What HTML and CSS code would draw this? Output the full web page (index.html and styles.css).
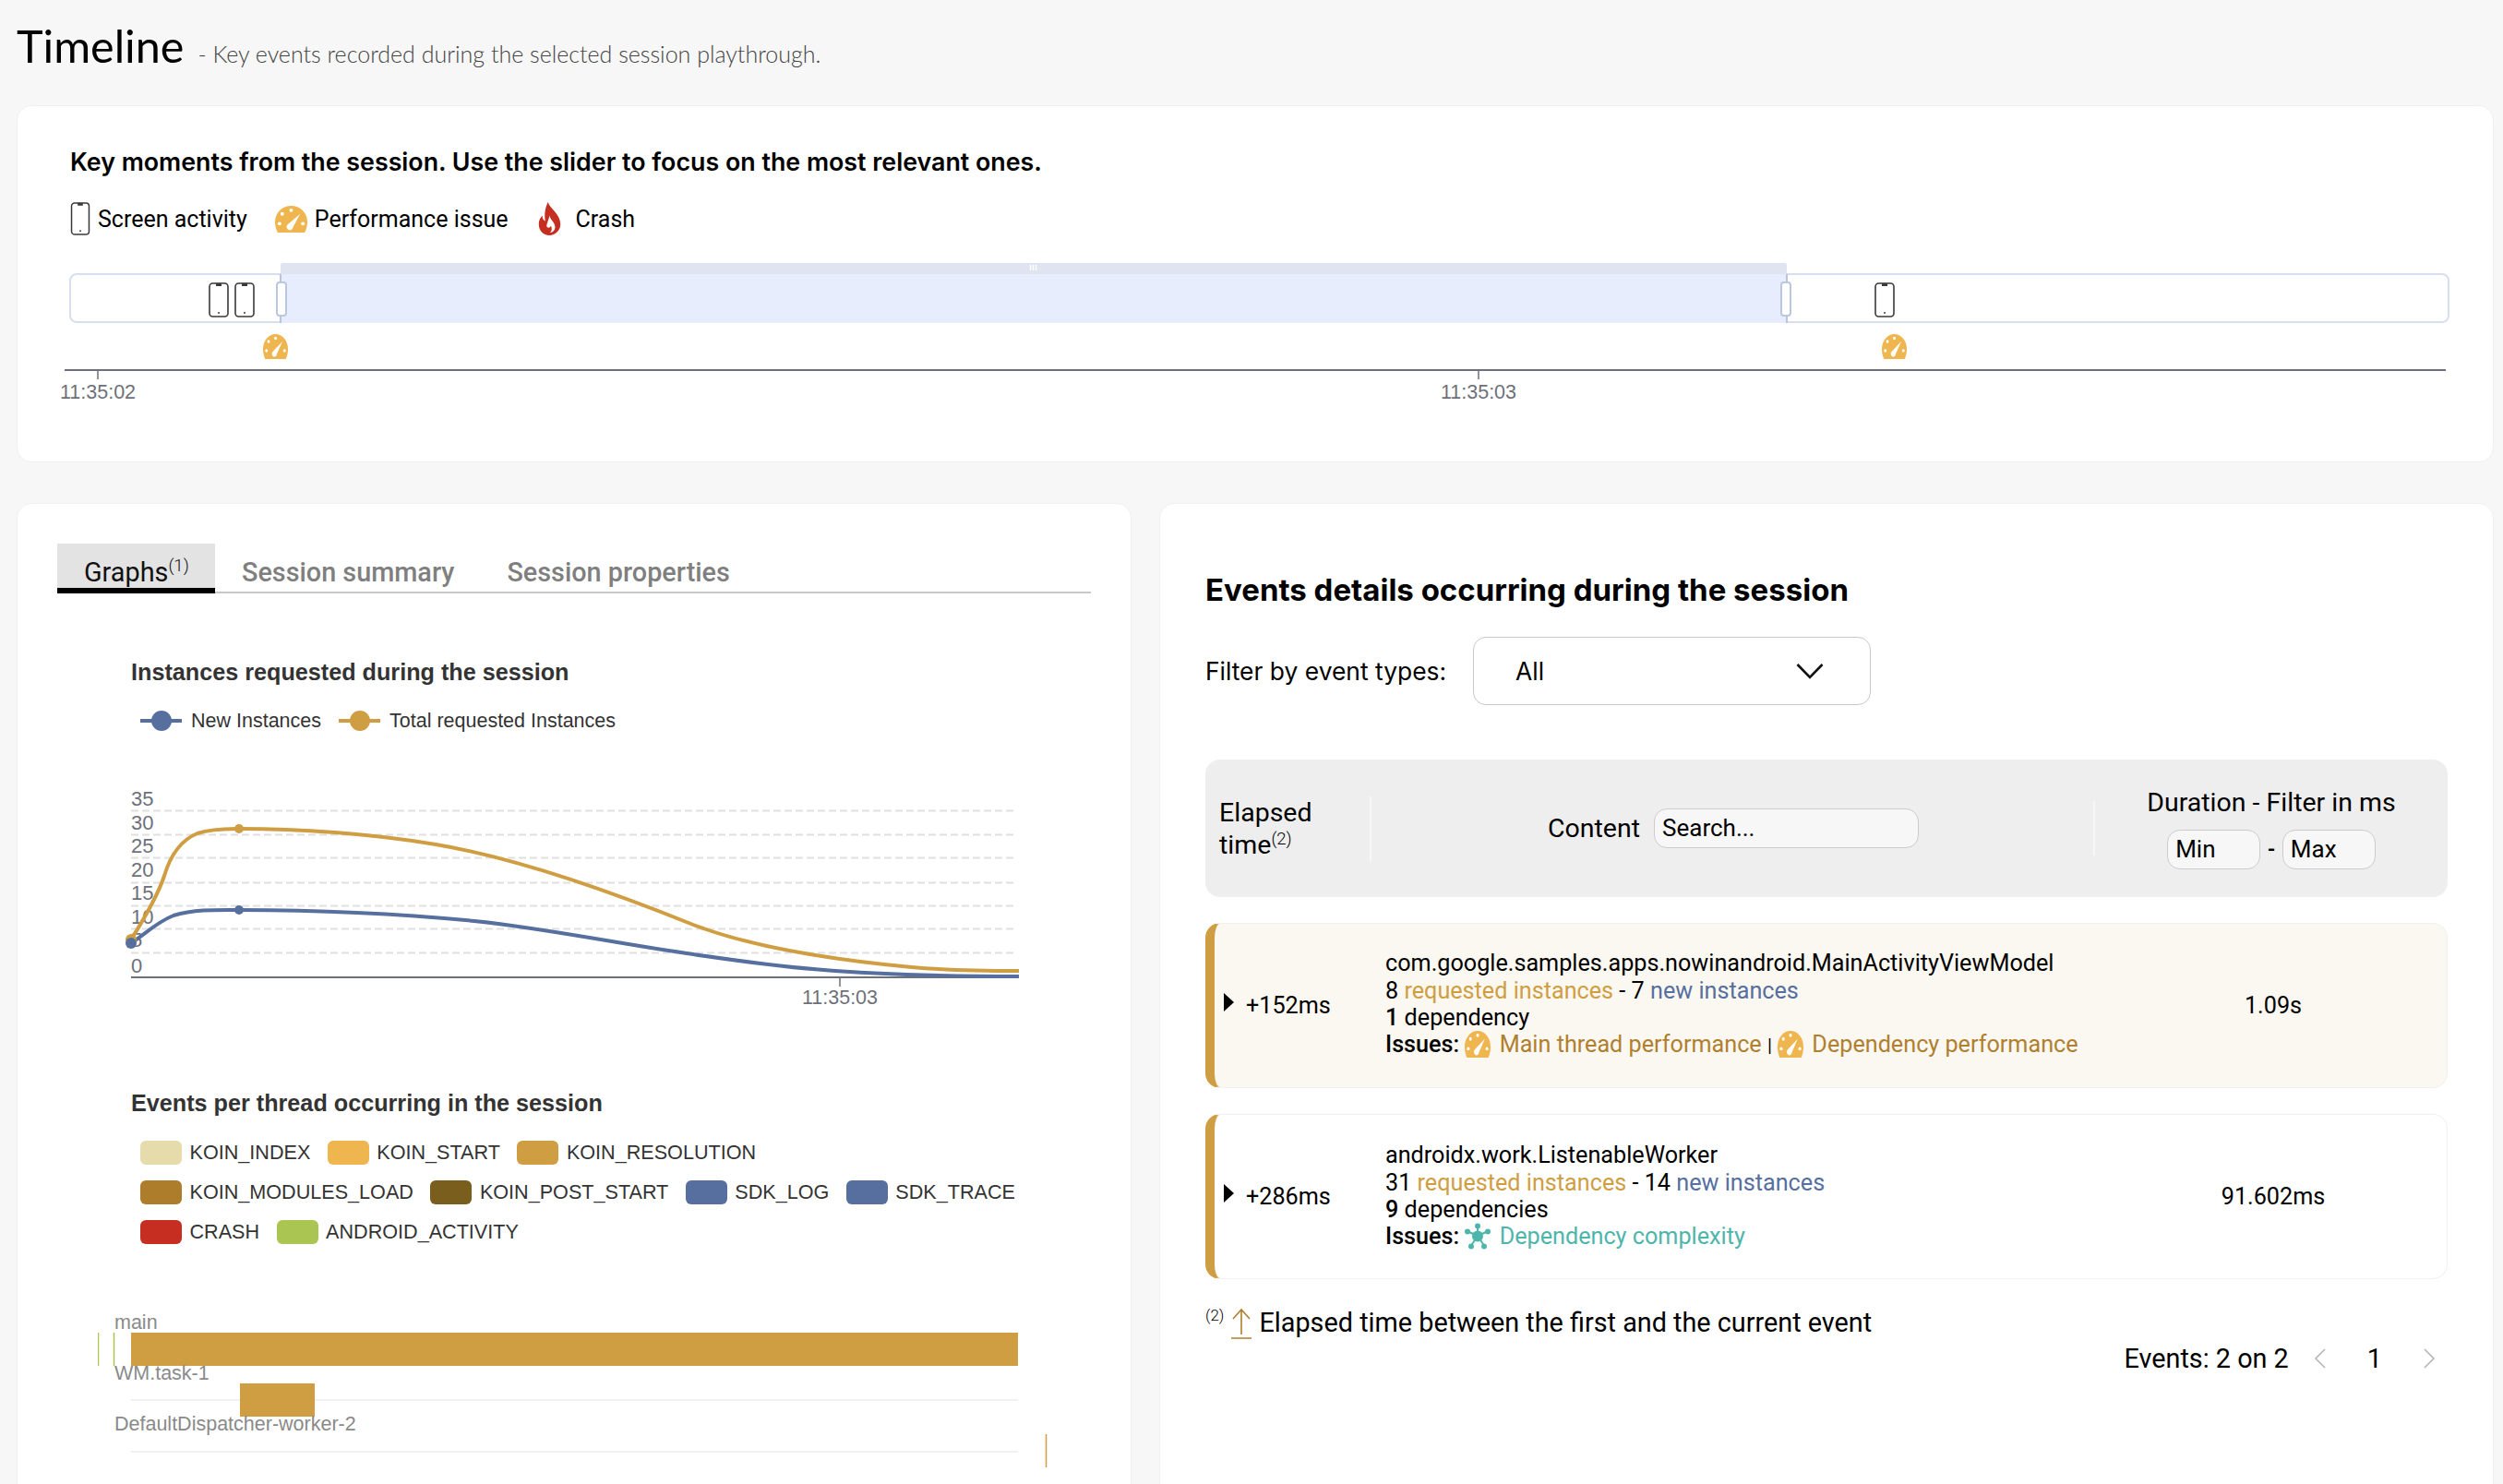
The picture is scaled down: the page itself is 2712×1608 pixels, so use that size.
FILE: index.html
```html
<!DOCTYPE html>
<html lang="en">
<head>
  <meta charset="UTF-8" />
  <title>Timeline</title>
  <link rel="stylesheet" href="styles.css">
</head>
<body>
  <svg class="defs" width="0" height="0">
    <symbol id="gauge" viewBox="0 0 36 30" preserveAspectRatio="none">
      <path fill="#efb54f" d="M3 30C1 26 0 22 0 18a18 18 0 0 1 36 0c0 4-1 8-3 12z"/>
      <g fill="#fff">
        <circle cx="18" cy="5" r="2"/>
        <circle cx="8" cy="9" r="2"/>
        <circle cx="5" cy="20" r="2"/>
        <circle cx="31" cy="20" r="2"/>
        <path d="M28 9 L20 24a3.6 3.6 0 1 1-6-3z"/>
      </g>
    </symbol>
    <symbol id="flame" viewBox="0 0 73 112">
      <path fill="#c72e22" d="M31 0C36 20 73 40 73 75C73 97 55 112 36 112C15 112 0 96 0 75C0 62 5 52 12 46C12 56 16 62 22 64C18 40 22 18 31 0z"/>
      <path fill="#fff" d="M37 44C35 58 56 66 55 86C54 96 46 102 38 103C45 96 45 88 41 80C38 86 32 88 28 84C24 79 30 68 37 44z"/>
    </symbol>
    <symbol id="phone" viewBox="0 0 22 38">
      <rect x="1" y="1" width="20" height="36" rx="3.5" fill="#fff" stroke="#3a3a3a" stroke-width="1.6"/>
      <rect x="8" y="1" width="6" height="3" fill="#3a3a3a"/>
      <circle cx="11" cy="33" r="1" fill="#3a3a3a"/>
    </symbol>
    <symbol id="network" viewBox="0 0 28 28">
      <g stroke="#4eb5ab" stroke-width="2">
        <path d="M14 14L14 4M14 14L4 9M14 14L24 9M14 14L7 24M14 14L21 24"/>
      </g>
      <g fill="#4eb5ab">
        <circle cx="14" cy="14" r="6"/>
        <circle cx="14" cy="3" r="3"/>
        <circle cx="3" cy="9" r="3"/>
        <circle cx="25" cy="9" r="3"/>
        <circle cx="7" cy="25" r="3"/>
        <circle cx="21" cy="25" r="3"/>
      </g>
    </symbol>
  </svg>

  <header class="page-head">
    <h1>Timeline</h1>
    <span>- Key events recorded during the selected session playthrough.</span>
  </header>

  <section class="card timeline-card">
    <h2>Key moments from the session. Use the slider to focus on the most relevant ones.</h2>
    <div class="moment-legend">
      <span class="moment-item"><svg class="ico-phone"><use href="#phone"/></svg>Screen activity</span>
      <span class="moment-item"><svg class="ico-gauge"><use href="#gauge"/></svg>Performance issue</span>
      <span class="moment-item"><svg class="ico-flame"><use href="#flame"/></svg>Crash</span>
    </div>
    <svg class="timeline" width="2600" height="160" viewBox="0 0 2600 160">
      <rect x="6" y="20" width="2577" height="52" rx="7" fill="#fff" stroke="#d7deef" stroke-width="2"/>
      <rect x="234" y="8" width="1632" height="12" rx="2" fill="#dfe4f0"/>
      <rect x="234" y="20" width="1632" height="53" fill="#e7edfc"/>
      <path d="M234 20v53M1866 20v53" stroke="#b9c5de" stroke-width="2"/>
      <rect x="230" y="29" width="10" height="36" rx="3" fill="#fff" stroke="#bac7e0" stroke-width="2"/>
      <rect x="1860" y="29" width="10" height="36" rx="3" fill="#fff" stroke="#bac7e0" stroke-width="2"/>
      <path d="M1046.500 10v6M1049.500 10v6M1052.500 10v6" stroke="#fff" stroke-width="1.500"/>
      <use href="#phone" x="156" y="29" width="22" height="38"/>
      <use href="#phone" x="184" y="29" width="22" height="38"/>
      <use href="#phone" x="1961" y="29" width="22" height="38"/>
      <use href="#gauge" x="215" y="85" width="27" height="27"/>
      <use href="#gauge" x="1969" y="85" width="27" height="27"/>
      <rect x="0" y="123" width="2580" height="2" fill="#6e7079"/>
      <path d="M36 124v10M1532 124v10" stroke="#6e7079" stroke-width="1.500"/>
      <text class="axis-label" x="36" y="155" text-anchor="middle">11:35:02</text>
      <text class="axis-label" x="1532" y="155" text-anchor="middle">11:35:03</text>
    </svg>
  </section>

  <div class="columns">
    <section class="card graphs-card">
      <nav class="tabs">
        <span class="tab active">Graphs<sup>(1)</sup></span>
        <span class="tab">Session summary</span>
        <span class="tab">Session properties</span>
      </nav>

      <h3 class="chart-title">Instances requested during the session</h3>
      <div class="line-legend">
        <span class="line-item"><i class="line-key blue"></i>New Instances</span>
        <span class="line-item"><i class="line-key gold"></i>Total requested Instances</span>
      </div>
      <svg class="line-chart" width="1000" height="240" viewBox="0 0 1000 240">
        <g class="grid">
          <path d="M0 27.500H958M0 53.500H958M0 78.500H958M0 105.500H958M0 130.500H958M0 155.500H958M0 181.500H958"/>
        </g>
        <g class="y-label">
          <text x="0" y="22">35</text>
          <text x="0" y="48">30</text>
          <text x="0" y="73">25</text>
          <text x="0" y="99">20</text>
          <text x="0" y="124">15</text>
          <text x="0" y="150">10</text>
          <text x="0" y="175">5</text>
          <text x="0" y="203">0</text>
        </g>
        <rect x="0" y="207" width="962" height="2" fill="#6e7079"/>
        <path d="M768 208v10" stroke="#6e7079" stroke-width="1.500"/>
        <text class="axis-label" x="768" y="237" text-anchor="middle">11:35:03</text>
        <path class="curve gold-line" d="M0 167C12 148 28 122 36 98C42 78 52 60 72 52C86 47.500 100 47 117 47C180 47 260 52 330 64C420 79 520 115 609 151C680 178 770 190 846 197C890 201 930 201 962 201"/>
        <path class="curve blue-line" d="M0 171C14 162 28 148 46 141C70 134 95 135 117 135C200 135 290 139 372 147C450 155 530 172 609 183C690 195 770 207 962 207"/>
        <circle cx="0" cy="167" r="6" fill="#d09e42"/>
        <circle cx="0" cy="171" r="6" fill="#566f9f"/>
        <circle cx="117" cy="47" r="5" fill="#d09e42"/>
        <circle cx="117" cy="135" r="5" fill="#566f9f"/>
      </svg>

      <h3 class="chart-title thread-title">Events per thread occurring in the session</h3>
      <div class="thread-legend">
        <span class="key"><i class="k-index"></i>KOIN_INDEX</span>
        <span class="key"><i class="k-start"></i>KOIN_START</span>
        <span class="key"><i class="k-resolution"></i>KOIN_RESOLUTION</span>
        <span class="key"><i class="k-modules"></i>KOIN_MODULES_LOAD</span>
        <span class="key"><i class="k-post"></i>KOIN_POST_START</span>
        <span class="key"><i class="k-sdk"></i>SDK_LOG</span>
        <span class="key"><i class="k-sdk"></i>SDK_TRACE</span>
        <span class="key"><i class="k-crash"></i>CRASH</span>
        <span class="key"><i class="k-activity"></i>ANDROID_ACTIVITY</span>
      </div>
      <svg class="thread-chart" width="1060" height="190" viewBox="0 0 1060 190">
        <text class="thread-name" x="18" y="27">main</text>
        <rect x="36" y="31" width="961" height="36" fill="#d09e42"/>
        <path d="M0.500 31v36M17.500 31v36" stroke="#abc552" stroke-width="1.500"/>
        <text class="thread-name" x="18" y="82">WM.task-1</text>
        <rect x="36" y="103" width="961" height="2" fill="#f0f1f3"/>
        <rect x="154" y="86" width="81" height="36" fill="#d09e42"/>
        <text class="thread-name" x="18" y="137">DefaultDispatcher-worker-2</text>
        <rect x="36" y="159" width="961" height="2" fill="#f0f1f3"/>
        <path d="M1027.500 141v36" stroke="#d09e42" stroke-width="1.500"/>
      </svg>
    </section>

    <section class="card events-card">
      <h2 class="events-title">Events details occurring during the session</h2>
      <div class="filter-row">
        <label>Filter by event types:</label>
        <div class="select">
          <span>All</span>
          <svg width="30" height="18" viewBox="0 0 30 18"><path d="M1.500 2L15 16 28.500 2" fill="none" stroke="#111" stroke-width="2.600"/></svg>
        </div>
      </div>

      <div class="table-head">
        <div class="head-elapsed">Elapsed<br>time<sup>(2)</sup></div>
        <div class="head-content">Content <span class="input search">Search...</span></div>
        <div class="head-duration">
          <div>Duration - Filter in ms</div>
          <div class="range"><span class="input small">Min</span><b>-</b><span class="input small">Max</span></div>
        </div>
      </div>

      <article class="event slow">
        <div class="event-time"><i class="caret"></i>+152ms</div>
        <div class="event-body">
          <div>com.google.samples.apps.nowinandroid.MainActivityViewModel</div>
          <div>8 <span class="req">requested instances</span> - 7 <span class="new">new instances</span></div>
          <div><b>1</b> dependency</div>
          <div><b>Issues:</b> <svg class="issue-ico"><use href="#gauge"/></svg> <span class="perf">Main thread performance</span> <span class="pipe">|</span> <svg class="issue-ico"><use href="#gauge"/></svg> <span class="perf">Dependency performance</span></div>
        </div>
        <div class="event-duration">1.09s</div>
      </article>

      <article class="event">
        <div class="event-time"><i class="caret"></i>+286ms</div>
        <div class="event-body">
          <div>androidx.work.ListenableWorker</div>
          <div>31 <span class="req">requested instances</span> - 14 <span class="new">new instances</span></div>
          <div><b>9</b> dependencies</div>
          <div><b>Issues:</b> <svg class="issue-ico"><use href="#network"/></svg> <span class="teal">Dependency complexity</span></div>
        </div>
        <div class="event-duration">91.602ms</div>
      </article>

      <p class="footnote"><sup>(2)</sup>
        <svg class="up-arrow" width="22" height="34" viewBox="0 0 22 34"><path d="M11 29V2M2 12L11 2l9 10M0 33h22" fill="none" stroke="#b07f2f" stroke-width="1.600"/></svg>
        Elapsed time between the first and the current event</p>

      <div class="pager">
        <span>Events: 2 on 2</span>
        <svg width="14" height="22" viewBox="0 0 14 22"><path d="M12 1L2 11l10 10" fill="none" stroke="#b5b5b5" stroke-width="1.600"/></svg>
        <span class="page-num">1</span>
        <svg width="14" height="22" viewBox="0 0 14 22"><path d="M2 1l10 10L2 21" fill="none" stroke="#b5b5b5" stroke-width="1.600"/></svg>
      </div>
    </section>
  </div>
</body>
</html>
```

FILE: styles.css
```css
* {
  box-sizing: border-box;
}

html, body {
  height: 1608px;
  overflow: hidden;
}

body {
  margin: 0;
  padding: 0 10px 0 18px;
  background: #f7f7f7;
  font-family: Roboto, sans-serif;
  color: #000;
}

.defs {
  position: absolute;
}

.page-head {
  height: 114px;
  padding-top: 23px;
  display: flex;
  align-items: baseline;
  gap: 15px;
}

h1 {
  margin: 0;
  font-family: Lato, sans-serif;
  font-weight: 400;
  font-size: 48.500px;
  line-height: 52px;
}

.page-head span {
  font-family: Lato, sans-serif;
  font-weight: 300;
  font-size: 25px;
  color: #444;
}

.card {
  background: #fff;
  border: 1px solid #f0f0f0;
  border-radius: 16px;
}

.timeline-card {
  height: 387px;
  padding: 42px 0 0 57px;
}

.timeline-card h2 {
  margin: 0;
  font-family: Inter, sans-serif;
  font-weight: 600;
  font-size: 26.800px;
  line-height: 36px;
}

.moment-legend {
  display: flex;
  margin-top: 26px;
  height: 36px;
  align-items: center;
  gap: 30px;
  font-size: 25px;
}

.moment-item {
  display: flex;
  align-items: center;
  gap: 8px;
}

.ico-phone {
  width: 22px;
  height: 36px;
}

.ico-gauge {
  width: 35px;
  height: 29px;
}

.ico-flame {
  width: 25px;
  height: 36px;
  margin: 0 8px 0 2px;
}

.timeline {
  display: block;
  margin: 22px 0 0 -6px;
  overflow: visible;
}

.axis-label {
  font-family: "Liberation Sans", sans-serif;
  font-size: 21.500px;
  fill: #6e7079;
}

.columns {
  display: grid;
  grid-template-columns: 1208px 1446px;
  gap: 30px;
  margin-top: 44px;
}

.graphs-card,
.events-card {
  height: 1100px;
}

.graphs-card {
  padding: 43px 43px 0 43px;
}

.tabs {
  display: flex;
  height: 54px;
  border-bottom: 2px solid #c9c9c9;
  font-size: 28.800px;
  font-weight: 500;
  color: #7f7f7f;
}

.tab {
  height: 54px;
  line-height: 62px;
  padding: 0 29px;
}

.tab:nth-child(3) {
  padding-left: 28px;
}

.tab.active {
  background: #e3e3e3;
  color: #111;
  font-weight: 400;
  border-bottom: 6px solid #000;
  width: 171px;
}

sup {
  font-size: 0.65em;
  font-weight: 300;
  line-height: 0;
}

.chart-title {
  margin: 70px 0 0 80px;
  font-family: "Liberation Sans", sans-serif;
  font-size: 25.200px;
  font-weight: 700;
  line-height: 30px;
  color: #333;
}

.line-legend {
  display: flex;
  gap: 19px;
  margin: 25px 0 0 90px;
  font-family: "Liberation Sans", sans-serif;
  font-size: 21.500px;
  color: #333;
}

.line-item {
  display: flex;
  align-items: center;
  gap: 10px;
  height: 26px;
}

.line-key {
  position: relative;
  width: 45px;
  height: 4px;
}

.line-key::after {
  content: "";
  position: absolute;
  left: 12px;
  top: -9px;
  width: 22px;
  height: 22px;
  border-radius: 50%;
  background: inherit;
}

.blue { background: #566f9f; }
.gold { background: #d09e42; }

.line-chart {
  display: block;
  margin: 57px 0 0 80px;
  overflow: visible;
}

.grid path {
  fill: none;
  stroke: #e0e0e0;
  stroke-width: 2;
  stroke-dasharray: 8 4;
}

.y-label text {
  font-family: "Liberation Sans", sans-serif;
  font-size: 22px;
  fill: #6e7079;
}

.curve {
  fill: none;
  stroke-width: 4;
}

.gold-line { stroke: #d09e42; }
.blue-line { stroke: #566f9f; }

.thread-title {
  margin-top: 89px;
}

.thread-legend {
  display: flex;
  flex-wrap: wrap;
  column-gap: 18.500px;
  row-gap: 17px;
  width: 960px;
  margin: 26px 0 0 90px;
  font-family: "Liberation Sans", sans-serif;
  font-size: 21.600px;
  color: #333;
}

.key {
  display: flex;
  align-items: center;
  gap: 8.500px;
  height: 26px;
}

.key i {
  width: 45px;
  height: 26px;
  border-radius: 6px;
}

.k-index { background: #e6dcab; }
.k-start { background: #efb54f; }
.k-resolution { background: #d09e42; }
.k-modules { background: #ae7d2c; }
.k-post { background: #7a5e1d; }
.k-sdk { background: #566f9f; }
.k-crash { background: #c72e22; }
.k-activity { background: #abc552; }

.thread-chart {
  display: block;
  margin: 65px 0 0 44px;
}

.thread-name {
  font-family: "Liberation Sans", sans-serif;
  font-size: 21.500px;
  fill: #8a8a8a;
}

.events-card {
  padding: 0 49px;
  font-size: 28.500px;
}

.events-title {
  margin: 71px 0 0;
  font-family: Inter, sans-serif;
  font-weight: 700;
  font-size: 33px;
  line-height: 44px;
}

.filter-row {
  display: flex;
  align-items: center;
  gap: 29px;
  margin-top: 29px;
  font-family: Inter, sans-serif;
  font-size: 26.400px;
}

.select {
  display: flex;
  align-items: center;
  justify-content: space-between;
  width: 431px;
  height: 74px;
  padding: 0 50px 0 45px;
  border: 1px solid #c8c8c8;
  border-radius: 14px;
}

.table-head {
  display: flex;
  align-items: center;
  height: 149px;
  margin-top: 59px;
  background: #eee;
  border-radius: 16px;
  text-align: center;
}

.head-elapsed {
  width: 180px;
  padding-left: 15px;
  text-align: left;
  line-height: 35px;
  border-right: 2px solid #f7f7f7;
}

.head-content {
  display: flex;
  align-items: center;
  justify-content: center;
  gap: 15px;
  width: 784px;
  height: 59px;
  border-right: 2px solid #f7f7f7;
  padding-left: 2px;
}

.head-duration {
  flex: 1;
}

.input {
  display: block;
  background: #f7f7f7;
  border: 1px solid #ccc;
  border-radius: 14px;
  height: 43px;
  padding-left: 8px;
  font-size: 26px;
  line-height: 41px;
  text-align: left;
}

.search {
  width: 287px;
}

.range {
  display: flex;
  justify-content: center;
  align-items: center;
  gap: 7.500px;
  margin-top: 13px;
}

.range b {
  font-size: 22px;
}

.small {
  width: 101px;
}

.event {
  display: flex;
  align-items: center;
  height: 179px;
  margin-top: 28px;
  border: 1px solid #f0f0f0;
  border-left: 10px solid #d09e42;
  border-radius: 16px;
  font-size: 25.200px;
  line-height: 29.400px;
}

.event.slow {
  background: #fbf8f1;
}

.event-time {
  display: flex;
  align-items: center;
  gap: 13px;
  width: 185px;
  padding-left: 10px;
}

.caret {
  width: 0;
  height: 0;
  margin-top: -8px;
  border-left: 11px solid #000;
  border-top: 10px solid transparent;
  border-bottom: 10px solid transparent;
}

.event-body {
  width: 856px;
  margin-top: -1px;
}

.event-duration {
  flex: 1;
  text-align: center;
  padding-right: 82px;
}

.event b {
  font-weight: 500;
}

.pipe {
  font-weight: 400;
  font-size: 0.8em;
}

.req { color: #d09e42; }
.new { color: #566f9f; }
.perf { color: #b07f2f; }
.teal { color: #4eb5ab; }

.issue-ico {
  width: 28px;
  height: 29px;
  margin-right: 3px;
  vertical-align: -6px;
}

.footnote {
  display: flex;
  align-items: flex-end;
  gap: 8px;
  margin: 29px 0 0;
  font-family: Roboto, sans-serif;
  font-size: 28.800px;
  line-height: 36px;
}

.footnote sup {
  align-self: flex-start;
  font-size: 17px;
  line-height: 20px;
}

.pager {
  display: flex;
  justify-content: flex-end;
  align-items: center;
  margin-top: 4px;
  gap: 27px;
  padding-right: 13px;
  font-size: 28.800px;
}

.page-num {
  margin: 0 17px;
}
```
